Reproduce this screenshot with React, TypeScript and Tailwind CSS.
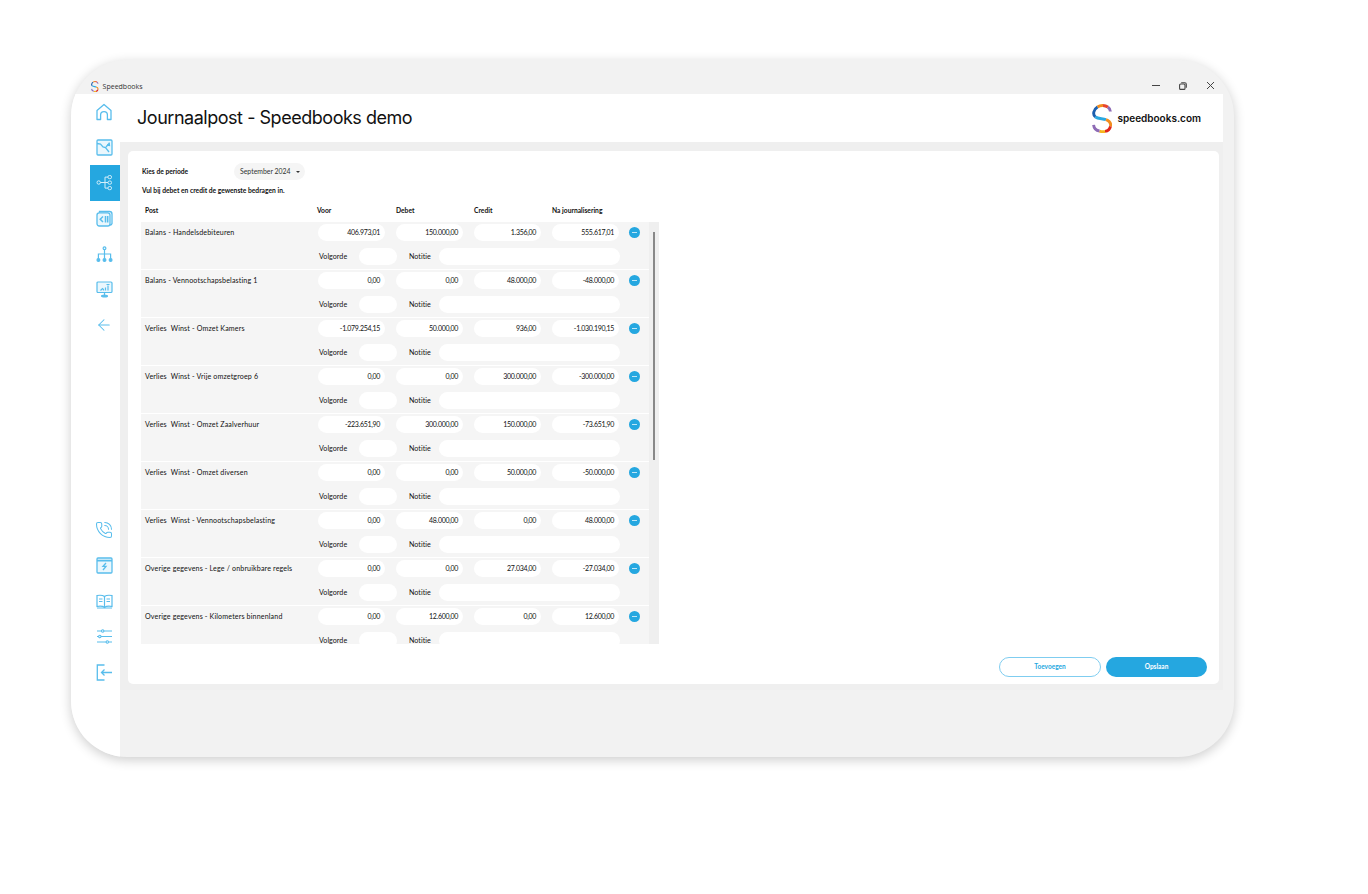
import React from 'react';
import { ArrowLeft, PhoneCall } from 'lucide-react';

const rows = [
  { post: 'Balans - Handelsdebiteuren', voor: '406.973,01', debet: '150.000,00', credit: '1.356,00', na: '555.617,01' },
  { post: 'Balans - Vennootschapsbelasting 1', voor: '0,00', debet: '0,00', credit: '48.000,00', na: '-48.000,00' },
  { post: 'Verlies  Winst - Omzet Kamers', voor: '-1.079.254,15', debet: '50.000,00', credit: '936,00', na: '-1.030.190,15' },
  { post: 'Verlies  Winst - Vrije omzetgroep 6', voor: '0,00', debet: '0,00', credit: '300.000,00', na: '-300.000,00' },
  { post: 'Verlies  Winst - Omzet Zaalverhuur', voor: '-223.651,90', debet: '300.000,00', credit: '150.000,00', na: '-73.651,90' },
  { post: 'Verlies  Winst - Omzet diversen', voor: '0,00', debet: '0,00', credit: '50.000,00', na: '-50.000,00' },
  { post: 'Verlies  Winst - Vennootschapsbelasting', voor: '0,00', debet: '48.000,00', credit: '0,00', na: '48.000,00' },
  { post: 'Overige gegevens - Lege / onbruikbare regels', voor: '0,00', debet: '0,00', credit: '27.034,00', na: '-27.034,00' },
  { post: 'Overige gegevens - Kilometers binnenland', voor: '0,00', debet: '12.600,00', credit: '0,00', na: '12.600,00' },
];

const Logo = ({ size }: { size: number }) => (
  <svg width={size * 0.69} height={size} viewBox="0 0 20 29" fill="none" strokeWidth="2.9">
    <path d="M18.4 7.5A8.6 6.5 0 0 0 15.8 3" stroke="#8e6bb5" />
    <path d="M15.8 3A8.6 6.5 0 0 0 11 1.5" stroke="#e8442e" />
    <path d="M11 1.5A9 9 0 0 0 5.5 3" stroke="#f28c1e" />
    <path d="M5.5 3C1.5 5.5 .4 10.5 3.4 13" stroke="#1c5fae" />
    <path d="M3.4 13C6 15 10.5 14.4 14 15.6" stroke="#2aa8e0" />
    <path d="M14 15.6C17.5 17 19.2 19.5 18.5 22.4" stroke="#f28c1e" />
    <path d="M18.5 22.4C17.8 25.2 15.6 27 13 27.4" stroke="#e0261c" />
    <path d="M13 27.4A8 8 0 0 1 7.5 27" stroke="#f5b51e" />
    <path d="M7.5 27A7 7 0 0 1 1.6 20.8" stroke="#8e6bb5" />
  </svg>
);

const navClass = 'w-[30px] h-[35.6px] flex items-center pl-[5px] shrink-0';

const Field = ({ value }: { value: string }) => (
  <div className="w-[67px] h-[17px] rounded-full bg-white text-right pr-[5px] leading-[17px] text-[7px] tracking-[-0.3px]">{value}</div>
);

const Row = ({ post, voor, debet, credit, na }: (typeof rows)[number]) => (
  <div className="h-[48px] shrink-0 bg-[#f5f5f5] border-b border-white pt-[2px] text-[7.1px] text-[#111]">
    <div className="flex items-center h-[17px]">
      <div className="w-[177px] pl-[4px] pt-[2px] whitespace-pre tracking-[0.15px]">{post}</div>
      <div className="flex gap-[11px]">
        <Field value={voor} />
        <Field value={debet} />
        <Field value={credit} />
        <Field value={na} />
      </div>
      <div className="ml-[10px] w-[11px] h-[11px] rounded-full bg-[#25a7e0] flex items-center justify-center">
        <div className="w-[5px] h-px bg-[#bfe6f7]" />
      </div>
    </div>
    <div className="flex items-center h-[17px] mt-[7px] pl-[178px] tracking-[0.05px]">
      <div className="w-[40px] pt-[2px]">Volgorde</div>
      <div className="w-[38px] h-[17px] rounded-full bg-white" />
      <div className="w-[30px] ml-[12px] pt-[2px]">Notitie</div>
      <div className="w-[181px] h-[17px] rounded-full bg-white" />
    </div>
  </div>
);

export default function App() {
  return (
    <div className="w-[1368px] h-[894px] bg-white overflow-hidden pt-[60px] pl-[71px] font-['Lato',sans-serif]">
      <div className="w-[1163px] h-[697px] rounded-[56px] overflow-hidden bg-[#f2f2f2] shadow-[0_3px_12px_rgba(0,0,0,0.2)] flex flex-col">
        {/* title bar */}
        <div className="h-[34px] shrink-0 flex items-end pb-[2px] pl-[20px] pr-[19px]">
          <Logo size={11} />
          <span className="ml-[4px] text-[7px] text-[#333] font-['Open_Sans',sans-serif] leading-[11px]">Speedbooks</span>
          <div className="ml-auto flex items-center gap-[18px] text-[#444] h-[11px] mb-[1px]">
            <div className="w-[8px] h-px bg-[#444]" />
            <svg width="8" height="8" viewBox="0 0 8 8" fill="none" stroke="#444" strokeWidth="1.1" className="ml-[1px]">
              <rect x="0.6" y="2" width="5.4" height="5.4" rx="1" />
              <path d="M2.2 .7h3.6a1.5 1.5 0 0 1 1.5 1.5v3.6" />
            </svg>
            <svg width="9" height="9" viewBox="0 0 9 9" stroke="#444" strokeWidth="1" className="ml-[1px]">
              <path d="M1 1l7 7M8 1L1 8" />
            </svg>
          </div>
        </div>

        <div className="flex flex-1 min-h-0">
          {/* sidebar */}
          <div className="w-[49px] shrink-0 bg-white flex flex-col items-end pb-[67px] text-[#58bdec]">
            <div className={navClass}>
              <svg width="18" height="18" viewBox="0 0 18 18" fill="none" stroke="currentColor" strokeWidth="1.3" strokeLinejoin="round">
                <path d="M2 16.5V7.5L9 1.5l7 6v9h-3.6V12a3.4 3.4 0 0 0-6.8 0v4.5z" />
              </svg>
            </div>
            <div className={navClass}>
              <svg width="17" height="17" viewBox="0 0 17 17" fill="none" stroke="currentColor" strokeWidth="1.3" className="ml-px">
                <rect x="1" y="1" width="15" height="15" rx="1" fill="#eaf7fd" />
                <path d="M1 4.5l3.5.5 2.5 3 2.5.5 3.5 4.5M10 8l3-3.5M13.2 3.5l.3 3-2.6-.3" />
              </svg>
            </div>
            <div className={`${navClass} bg-[#25a7e0]`}>
              <svg width="17" height="17" viewBox="0 0 17 17" fill="none" stroke="#d5effa" strokeWidth="1" className="ml-[1px]">
                <circle cx="2.7" cy="8.5" r="1.7" />
                <rect x="12" y="1.5" width="3.5" height="3.2" rx="1.4" />
                <rect x="12" y="7" width="3.5" height="3.2" rx="1.4" />
                <rect x="12" y="12.5" width="3.5" height="3.2" rx="1.4" />
                <path d="M4.4 8.5H12M9 3.1h3M9 14.1h3M9 3.1v11" />
              </svg>
            </div>
            <div className={navClass}>
              <svg width="17" height="17" viewBox="0 0 17 17" fill="none" stroke="currentColor" strokeWidth="1.3" className="ml-px">
                <rect x="1" y="2.8" width="13" height="13.2" rx="2.2" fill="#eaf7fd" />
                <path d="M3.5 2.8V1.5h10a2.5 2.5 0 0 1 2.5 2.5v9.5a2 2 0 0 1-2 1.5" />
                <path d="M7 6.5L4.2 9.2 7 12M9.5 6v6.5M11.7 6v6.5" strokeWidth="1.5" />
              </svg>
            </div>
            <div className={navClass}>
              <svg width="17" height="17" viewBox="0 0 17 17" fill="none" stroke="currentColor" strokeWidth="1.2" className="ml-px">
                <circle cx="8.5" cy="2.2" r="1.4" />
                <path d="M8.5 3.6v9M2.4 12.5V8h12.2v4.5" />
                <circle cx="2.4" cy="14" r="1.4" fill="currentColor" />
                <circle cx="8.5" cy="14" r="1.4" fill="currentColor" />
                <circle cx="14.6" cy="14" r="1.4" fill="currentColor" />
              </svg>
            </div>
            <div className={navClass}>
              <svg width="17" height="17" viewBox="0 0 17 17" fill="none" stroke="currentColor" strokeWidth="1.2" className="ml-px">
                <rect x="1" y="1" width="15" height="10.5" rx="1" fill="#eaf7fd" />
                <path d="M4.5 9.5l2-2 1 1V9.5M9.5 9.5V6.5M12 9.5V4.5M10.5 3.5h3M8.5 11.5v2.5" />
                <ellipse cx="8.5" cy="15" rx="3" ry="1" fill="currentColor" />
              </svg>
            </div>
            <div className={navClass}><ArrowLeft size={18} strokeWidth={1.4} /></div>

            <div className="mt-auto flex flex-col items-end">
              <div className={navClass}><PhoneCall size={18} strokeWidth={1.4} /></div>
              <div className={navClass}>
                <svg width="17" height="17" viewBox="0 0 17 17" fill="none" stroke="currentColor" strokeWidth="1.3" className="ml-px">
                  <rect x="1" y="1" width="15" height="15" rx="1" fill="#eaf7fd" />
                  <path d="M1 3.7h15" strokeWidth="1.8" />
                  <path d="M10 6L7 9.3h3l-3 3.7" />
                </svg>
              </div>
              <div className={navClass}>
                <svg width="17" height="17" viewBox="0 0 17 17" fill="none" stroke="currentColor" strokeWidth="1.2" className="ml-px">
                  <path d="M8.5 3.5C7 2.3 4 2 1 2.5v11c3-.5 6-.3 7.5 1 1.5-1.3 4.5-1.5 7.5-1v-11c-3-.5-6-.2-7.5 1zM8.5 3.5v11" />
                  <path d="M3 6h3.5M3 8.5h3.5M10.5 6H14M10.5 8.5H14" strokeWidth="1" />
                  <path d="M1 15h15" />
                </svg>
              </div>
              <div className={navClass}>
                <svg width="17" height="17" viewBox="0 0 17 17" fill="none" stroke="currentColor" strokeWidth="1.1" className="ml-px">
                  <path d="M1 3h4.5M8 3h8M1 8.5h1.5M5 8.5h11M1 14h9M12.5 14H16" />
                  <circle cx="6.7" cy="3" r="1.2" />
                  <circle cx="3.8" cy="8.5" r="1.2" />
                  <circle cx="11.3" cy="14" r="1.2" />
                </svg>
              </div>
              <div className={navClass}>
                <svg width="17" height="17" viewBox="0 0 17 17" fill="none" stroke="currentColor" strokeWidth="1.3" className="ml-px">
                  <path d="M8.5 1H1.3v15h7.2M16 8.5H5.5M8.5 5.5l-3 3 3 3" />
                </svg>
              </div>
            </div>
          </div>

          {/* main */}
          <div className="w-[1103px] shrink-0 flex flex-col">
            <div className="h-[48px] shrink-0 bg-white flex items-center pl-[17px] pr-[22px]">
              <h1 className="text-[18px] text-[#111] tracking-[-0.47px] pb-[1px] font-['Inter',sans-serif]">Journaalpost - Speedbooks demo</h1>
              <div className="ml-auto flex items-center">
                <Logo size={29} />
                <span className="ml-[5px] text-[10px] font-semibold text-[#111] font-['Inter',sans-serif]">speedbooks.com</span>
              </div>
            </div>

            <div className="h-[548px] shrink-0 bg-[#efefef] pt-[9px] pl-[8px] pr-[4px]">
              <div className="h-[533px] bg-white rounded-[5px] flex flex-col pl-[13px]">
                <div className="h-[29px] pt-[12px] flex items-center text-[6.7px] font-bold text-[#111] pl-[1px] shrink-0">
                  <div className="w-[92px]">Kies de periode</div>
                  <div className="w-[71px] h-[17px] rounded-full bg-[#f5f5f5] flex items-center pl-[6px] font-normal text-[#333] text-[6.9px] whitespace-nowrap">
                    <span className="w-[50px]">September 2024</span>
                    <span className="ml-[6px] border-x-[2px] border-t-[2px] border-x-transparent border-t-[#333]" />
                  </div>
                </div>
                <div className="mt-[6px] pl-[1px] text-[6.7px] font-bold text-[#111] leading-[9px] shrink-0">Vul bij debet en credit de gewenste bedragen in.</div>
                <div className="mt-[11px] h-[9px] flex text-[6.7px] font-bold text-[#111] leading-[9px] shrink-0">
                  <div className="w-[176px] pl-[4px]">Post</div>
                  <div className="w-[79px]">Voor</div>
                  <div className="w-[78px]">Debet</div>
                  <div className="w-[78px]">Credit</div>
                  <div>Na journalisering</div>
                </div>
                <div className="mt-[7px] h-[422px] shrink-0 w-[518px] flex overflow-hidden">
                  <div className="w-[508px] flex flex-col">
                    {rows.map((r) => <Row key={r.post} {...r} />)}
                  </div>
                  <div className="w-[10px] bg-[#efefef] pt-[10px] flex justify-center">
                    <div className="w-[2px] h-[228px] bg-[#888]" />
                  </div>
                </div>
                <div className="mt-[13px] flex justify-end gap-[5px] pr-[12px] text-[6.5px] font-bold">
                  <div className="w-[102px] h-[20px] rounded-full border border-[#7fcdf0] text-[#25a7e0] flex items-center justify-center">Toevoegen</div>
                  <div className="w-[101px] h-[20px] rounded-full bg-[#25a7e0] text-white flex items-center justify-center">Opslaan</div>
                </div>
              </div>
            </div>
          </div>
        </div>
      </div>
    </div>
  );
}
